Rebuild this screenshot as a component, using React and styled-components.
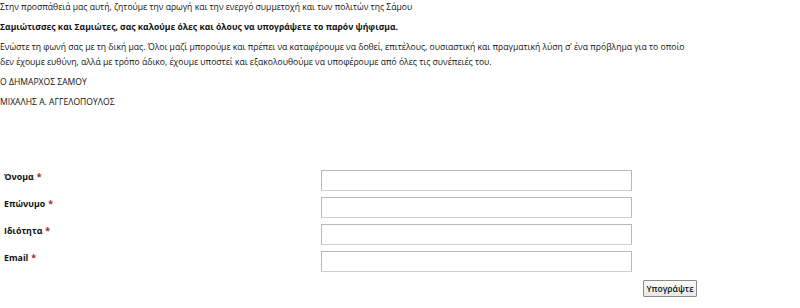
import styled, { createGlobalStyle } from 'styled-components'

const GlobalStyle = createGlobalStyle`
  html, body { margin: 0; padding: 0; background: #fff; }
  body {
    font-family: "Open Sans", "DejaVu Sans", sans-serif;
    color: #111;
  }
`

const Page = styled.div`
  width: 800px;
  height: 308px;
  overflow: hidden;
`

const Intro = styled.div`
  width: 800px;
`

const Para = styled.p`
  margin: 0 0 5px;
  font-size: 8.6px;
  line-height: 15px;
  white-space: nowrap;
  font-weight: ${({ $bold }) => ($bold ? 700 : 400)};
`

const SignForm = styled.form`
  width: 697px;
  margin-top: 60px;
  display: flex;
  flex-direction: column;
`

const Row = styled.div`
  display: grid;
  grid-template-columns: 321px 311px;
  align-items: center;
  height: 21px;
  margin-bottom: 6px;
`

const Label = styled.label`
  padding-left: 4px;
  font-size: 8.8px;
  font-weight: 700;
  margin-top: -7px;
`

const Req = styled.span`
  color: #a3262c;
  margin-left: 3px;
`

const Field = styled.input`
  box-sizing: border-box;
  width: 311px;
  height: 21px;
  border: 1px solid #b8b8b8;
  border-bottom-color: #d0d0d0;
  background: #fff;
  margin: 0;
  padding: 0 4px;
`

const Actions = styled.div`
  display: flex;
  justify-content: flex-end;
  margin-top: 2px;
`

const SubmitBtn = styled.button`
  box-sizing: border-box;
  width: 54px;
  height: 17px;
  padding: 0;
  font-family: "Open Sans", "DejaVu Sans", sans-serif;
  font-size: 8.6px;
  font-weight: 600;
  color: #111;
  background: linear-gradient(#fafafa, #e8e8e8);
  border: 1px solid #8a8a8a;
  border-radius: 1px;
`

const fields = ['Όνομα', 'Επώνυμο', 'Ιδιότητα', 'Email']

export default function App() {
  return (
    <Page>
      <GlobalStyle />
      <Intro>
        <Para>Στην προσπάθειά μας αυτή, ζητούμε την αρωγή και την ενεργό συμμετοχή και των πολιτών της Σάμου</Para>
        <Para $bold>Σαμιώτισσες και Σαμιώτες, σας καλούμε όλες και όλους να υπογράψετε το παρόν ψήφισμα.</Para>
        <Para>
          Ενώστε τη φωνή σας με τη δική μας. Όλοι μαζί μπορούμε και πρέπει να καταφέρουμε να δοθεί, επιτέλους, ουσιαστική και πραγματική λύση σ’ ένα πρόβλημα για το οποίο
          <br />
          δεν έχουμε ευθύνη, αλλά με τρόπο άδικο, έχουμε υποστεί και εξακολουθούμε να υποφέρουμε από όλες τις συνέπειές του.
        </Para>
        <Para>Ο ΔΗΜΑΡΧΟΣ ΣΑΜΟΥ</Para>
        <Para>ΜΙΧΑΛΗΣ Α. ΑΓΓΕΛΟΠΟΥΛΟΣ</Para>
      </Intro>

      <SignForm onSubmit={e => e.preventDefault()}>
        {fields.map(name => (
          <Row key={name}>
            <Label>
              {name}<Req>*</Req>
            </Label>
            <Field type="text" aria-label={name} />
          </Row>
        ))}
        <Actions>
          <SubmitBtn type="submit">Υπογράψτε</SubmitBtn>
        </Actions>
      </SignForm>
    </Page>
  )
}
